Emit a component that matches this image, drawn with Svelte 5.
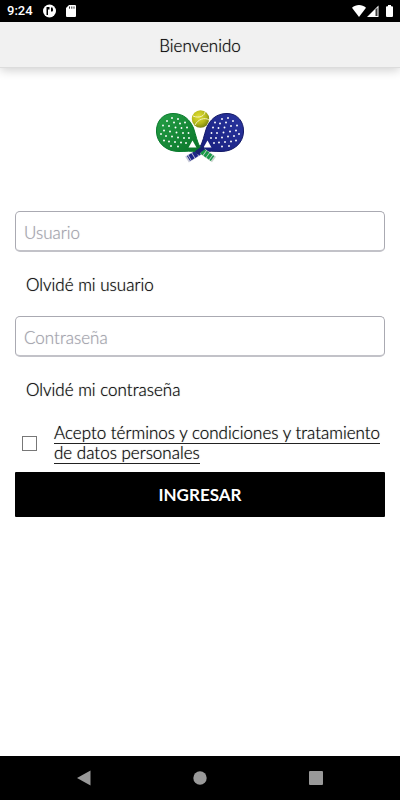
<script>
  let user = $state('');
  let password = $state('');
  let accepted = $state(false);

  // Perforations of the left racket; the right one mirrors them.
  const holes = [
    [22, 13], [28, 14], [17, 16], [24, 17.5], [30, 18.5], [35, 17.5], [13, 20.5], [19, 21],
    [25.5, 22.5], [31.5, 23], [37, 22.5], [14, 25.5], [20, 26.5], [26.5, 27.5], [33, 28],
    [38.5, 28], [11, 29], [16, 31], [22, 31.5], [28, 32.5], [34, 33], [39, 33], [14, 35.5],
    [19, 36.5], [25, 37], [31, 37.5], [36, 38], [21, 41], [28, 41.5]
  ];
</script>

<div class="screen">
  <div class="status">
    <span class="time">9:24</span>
    <svg width="13" height="14" viewBox="0 0 13 14" aria-hidden="true">
      <circle cx="6.5" cy="7" r="6.5" fill="#fff" />
      <path d="M3.500 3h3v2.500H5v5.500H3.500zM8 3.500h1.500q1 2 0 4H8z" fill="#000" />
    </svg>
    <svg width="10" height="12" viewBox="0 0 10 12" aria-hidden="true">
      <path d="M3 0h6q1 0 1 1v10q0 1-1 1H1q-1 0-1-1V3z" fill="#fff" />
      <path d="M3.5 1.5v2.2M5.8 1.5v2.2M8 1.5v2.2" stroke="#000" stroke-width=".8" />
    </svg>
    <svg class="signals" width="41" height="12" viewBox="0 0 41 12" aria-hidden="true">
      <path d="M0 2.8C4-.9 10-.9 14 2.8L7 12z" fill="#fff" />
      <path d="M26.5.5V12H15z" fill="#fff" />
      <path d="M23.5 4.5V11h2V2.5z" fill="#000" opacity=".75" />
      <path d="M36 0h3v1.200H40q1 0 1 1V11q0 1-1 1h-5q-1 0-1-1V2.200q0-1 1-1h1z" fill="#fff" />
    </svg>
  </div>

  <header><h1>Bienvenido</h1></header>

  <main>
    <svg class="logo" width="100" height="62" viewBox="0 0 100 62" role="img" aria-label="Pádel">
      <defs>
        <linearGradient id="green" x1="0" y1="0" x2="1" y2="1">
          <stop offset="0" stop-color="#26a047" /><stop offset="1" stop-color="#087328" />
        </linearGradient>
        <linearGradient id="blue" x1="0" y1="0" x2="1" y2="1">
          <stop offset="0" stop-color="#2a35a0" /><stop offset="1" stop-color="#171f7c" />
        </linearGradient>
        <radialGradient id="ball" cx=".4" cy=".35" r=".7">
          <stop offset="0" stop-color="#e2df35" /><stop offset=".6" stop-color="#b5b91a" /><stop offset="1" stop-color="#737d12" />
        </radialGradient>
        <path id="head" d="M6.500 27C6 16 13 8.500 23 8.500C34 8.500 40 15 43.500 23C46 30 47 38 51 43.500L47 47C41 45.500 36 46.500 29 46.500C16 46.500 7 38 6.500 27Z" />
      </defs>
      <path d="M54 44L37 54.500" stroke="#c9cbd8" stroke-width="7" />
      <path d="M54 44L38.500 53.500" stroke="#1d2789" stroke-width="6" stroke-dasharray="3.500 .8" />
      <use href="#head" transform="translate(100 0) scale(-1 1)" fill="url(#blue)" stroke="#131966" />
      <use href="#head" fill="url(#green)" stroke="#087b2d" />
      <path d="M57.500 35.500L53.500 42.500L61.500 42.500Z" fill="#fff" />
      <path d="M42.500 35.500L38.500 42.500L46.500 42.500Z" fill="#fff" />
      <path d="M52 46L64 54.500" stroke="#c9d5cd" stroke-width="7" />
      <path d="M52 46L62.500 53.500" stroke="#189947" stroke-width="6" stroke-dasharray="3 .8" />
      <path d="M54 42.500L46 48" stroke="#17216f" stroke-width="4" />
      {#each holes as [x, y]}
        <circle cx={x} cy={y} r=".95" fill="#fff" />
        <circle cx={100 - x} cy={y} r=".95" fill="#fff" />
      {/each}
      <circle cx="50.500" cy="14" r="8.700" fill="url(#ball)" />
      <path d="M43 11C50 14 55 10 55 7M45 20C48 14 55 12 59 15" fill="none" stroke="#f3f3c3" stroke-width="1" />
    </svg>

    <form onsubmit={(e) => e.preventDefault()}>
      <input class="field" type="text" aria-label="Usuario" placeholder="Usuario" bind:value={user} />
      <a class="forgot" href="#usuario">Olvidé mi usuario</a>
      <input class="field" type="password" aria-label="Contraseña" placeholder="Contraseña" bind:value={password} />
      <a class="forgot" href="#contrasena">Olvidé mi contraseña</a>
      <div class="terms">
        <input id="accept" type="checkbox" bind:checked={accepted} />
        <label for="accept"><span>Acepto términos y condiciones y tratamiento de datos personales</span></label>
      </div>
      <button class="submit" type="submit">INGRESAR</button>
    </form>
  </main>

  <nav aria-label="Sistema">
    <button type="button" aria-label="Atrás">
      <svg width="16" height="16" viewBox="0 0 16 16"><path d="M14.500 .5v15L1 8z" fill="#999" /></svg>
    </button>
    <button type="button" aria-label="Inicio">
      <svg width="16" height="16" viewBox="0 0 16 16"><circle cx="8" cy="8" r="6.700" fill="#999" /></svg>
    </button>
    <button type="button" aria-label="Recientes">
      <svg width="16" height="16" viewBox="0 0 16 16"><rect x="1" y="1" width="14" height="14" rx="1" fill="#999" /></svg>
    </button>
  </nav>
</div>

<style>
  .screen {
    display: flex;
    flex-direction: column;
    min-height: 100vh;
    background: #fff;
    color: #000;
    font-family: Lato, "Liberation Sans", sans-serif;
    font-size: 17px;
    font-weight: 300;
    line-height: 20px;
  }
  .status {
    display: flex;
    align-items: center;
    gap: 10px;
    height: 22px;
    padding: 0 7px;
    background: #000;
    color: #fff;
  }
  .time {
    font-family: Roboto, sans-serif;
    font-size: 13px;
    font-weight: 500;
  }
  .signals { margin-left: auto; }
  header {
    display: flex;
    align-items: center;
    justify-content: center;
    box-sizing: border-box;
    height: 46px;
    padding-top: 2px;
    background: #f1f1f1;
    border-bottom: 1px solid #dcdcdc;
    box-shadow: 0 2px 10px rgba(0, 0, 0, 0.2);
  }
  h1 {
    margin: 0;
    font-size: 17px;
    font-weight: 300;
  }
  h1,
  .forgot,
  .terms label {
    text-shadow: 0 0 1px rgba(0, 0, 0, 0.6);
  }
  main {
    display: flex;
    flex-direction: column;
    flex: 1;
    padding: 37px 15px 0;
  }
  .logo { align-self: center; }
  form {
    display: flex;
    flex-direction: column;
    margin-top: 44px;
  }
  .field {
    box-sizing: border-box;
    width: 100%;
    height: 41px;
    padding: 3px 8px 0;
    border: 1px solid #aaaab2;
    border-bottom: 2px solid #c2c2c8;
    border-radius: 5px;
    background: #fff;
    color: #000;
    font: inherit;
  }
  .field::placeholder {
    color: #a0a0aa;
    opacity: 1;
    text-shadow: 0 0 1px rgba(160, 160, 170, 0.6);
  }
  .forgot {
    align-self: flex-start;
    margin: 23px 11px 21px;
    color: #000;
    text-decoration: none;
  }
  .terms {
    display: flex;
    align-items: center;
    gap: 17px;
    padding: 2px 0 9px 7px;
  }
  .terms input {
    appearance: none;
    flex: none;
    width: 15px;
    height: 15px;
    margin: 0;
    border: 1px solid #777;
    background: #fff;
  }
  .terms input:checked { background: #000; }
  .terms span { border-bottom: 1px solid #222; }
  .submit {
    height: 45px;
    padding: 1px 0 0;
    border: 0;
    border-radius: 1px;
    background: #000;
    color: #fff;
    font: inherit;
    font-weight: 700;
  }
  nav {
    display: flex;
    align-items: center;
    justify-content: space-around;
    height: 44px;
    padding: 0 26px;
    background: #000;
  }
  nav button {
    display: flex;
    padding: 0;
    border: 0;
    background: none;
  }
</style>
